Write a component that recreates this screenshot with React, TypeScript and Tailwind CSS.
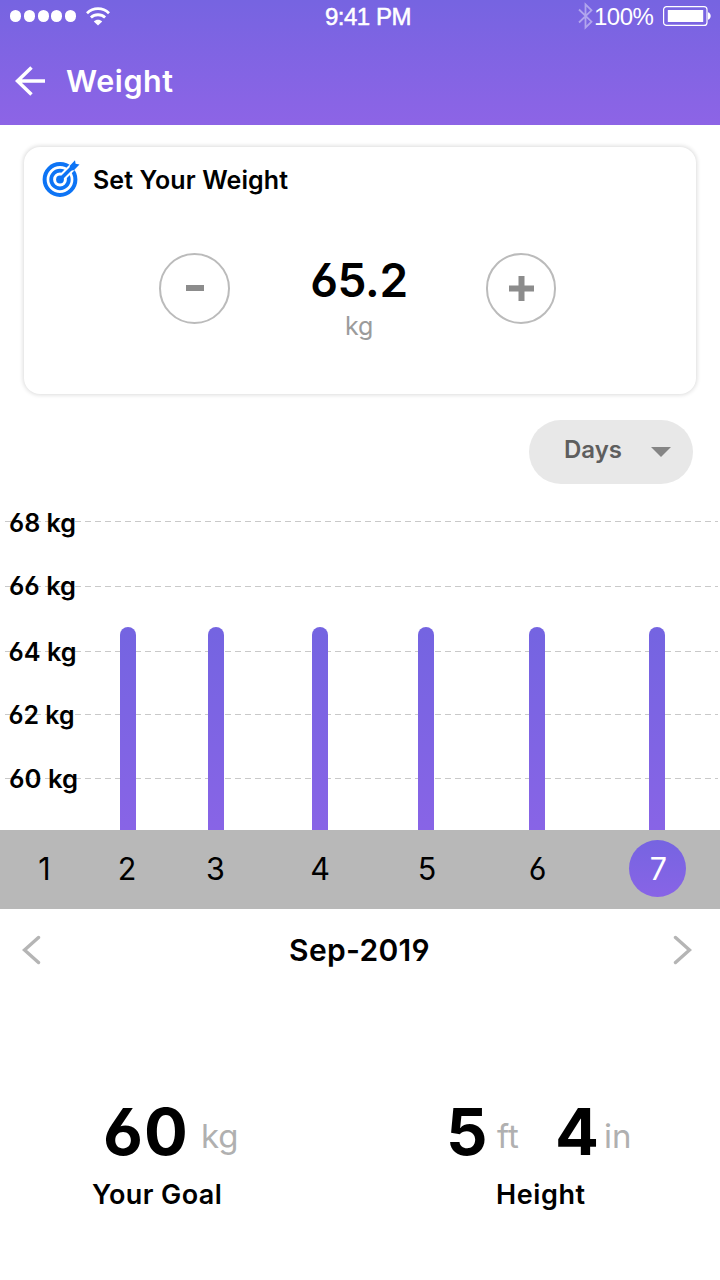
import { useState } from 'react';

type Bar = { day: number; x: number; height: number };

const bars: Bar[] = [
  { day: 2, x: 128, height: 203 },
  { day: 3, x: 216, height: 203 },
  { day: 4, x: 320, height: 203 },
  { day: 5, x: 426, height: 203 },
  { day: 6, x: 537, height: 203 },
  { day: 7, x: 657, height: 203 },
];

const gridLines = [
  { label: '68 kg', y: 37.5, textY: 48, x: 9, width: 67 },
  { label: '66 kg', y: 102.5, textY: 111, x: 9, width: 67 },
  { label: '64 kg', y: 167.5, textY: 177, x: 8.5, width: 68 },
  { label: '62 kg', y: 230.5, textY: 240, x: 8.5, width: 66 },
  { label: '60 kg', y: 294.5, textY: 304, x: 9, width: 69 },
];

// column widths keep every number under its bar
const days = [
  { day: 1, width: 'w-[89px]' },
  { day: 2, width: 'w-[76px]' },
  { day: 3, width: 'w-[101px]' },
  { day: 4, width: 'w-[108px]' },
  { day: 5, width: 'w-[106px]' },
  { day: 6, width: 'w-[115px]' },
  { day: 7, width: 'w-[125px]' },
];

function StatusBar() {
  return (
    <div className="flex h-8 items-center pl-[10px] pr-[9px]">
      <div className="flex w-[315px] items-center">
        <div className="flex gap-[2.75px]">
          {[0, 1, 2, 3, 4].map((i) => (
            <span key={i} className="h-[11.5px] w-[11px] rounded-full bg-white" />
          ))}
        </div>
        <svg className="ml-[10px]" width="24" height="19" viewBox="0 0 24 19" fill="none" stroke="white">
          <path d="M1 6.2C7.2.2 16.8.2 23 6.2" strokeWidth="2.8" />
          <path d="M4.9 10.6c4-3.8 10.2-3.8 14.2 0" strokeWidth="2.8" />
          <path d="M12 18.6l-4.2-4.2c2.4-2.2 6-2.2 8.4 0z" fill="white" stroke="none" />
        </svg>
      </div>
      <span className="w-[253px] whitespace-nowrap pt-0.5 font-['Liberation_Sans',sans-serif] text-[24px] leading-8 tracking-[-0.5px] [-webkit-text-stroke:0.5px_white]">
        9:41 PM
      </span>
      <svg width="16" height="28" viewBox="0 0 16 28" fill="none" stroke="white" strokeWidth="1.8" opacity="0.42">
        <path d="M1 7.5l12.5 12.2-6 6V2.3l6 6L1 20.5" />
      </svg>
      <span className="w-[61px] whitespace-nowrap pt-px font-['Liberation_Sans',sans-serif] text-[24px] leading-8 tracking-[-0.5px]">
        100%
      </span>
      <svg className="ml-auto" width="48" height="20" viewBox="0 0 48 20">
        <rect x="0.6" y="0.6" width="43.4" height="18.8" rx="3" fill="none" stroke="white" strokeWidth="1.2" />
        <rect x="4.8" y="4" width="35.4" height="12" fill="white" />
        <path d="M45 6.2c3.6 1.2 3.6 6.4 0 7.6z" fill="white" />
      </svg>
    </div>
  );
}

function TargetIcon() {
  return (
    <svg className="mb-[3px]" width="40" height="40" viewBox="0 0 40 40" fill="none">
      <circle cx="20" cy="21.5" r="15.4" stroke="#0d74f5" strokeWidth="4" />
      <circle cx="20" cy="21.5" r="8.8" stroke="#0d74f5" strokeWidth="3.8" />
      <path d="M21 20.5L37 4.5" stroke="white" strokeWidth="7.5" />
      <circle cx="20" cy="21.5" r="3.9" fill="#0d74f5" />
      <path d="M20 21.5L34 7.5" stroke="#0d74f5" strokeWidth="3.6" />
      <path d="M29.8 7.8L35 2.2l.6 3.6 3.9.8-5.6 5.6-4.2.4z" fill="#0d74f5" />
    </svg>
  );
}

function WeightChart() {
  return (
    <svg className="block" width="720" height="346" viewBox="0 0 720 346">
      <defs>
        <linearGradient id="bar" x1="0" y1="143" x2="0" y2="346" gradientUnits="userSpaceOnUse">
          <stop offset="0" stopColor="#7464e1" />
          <stop offset="1" stopColor="#8864e6" />
        </linearGradient>
      </defs>
      {gridLines.map((line) => (
        <g key={line.label}>
          <line x1="5" x2="718" y1={line.y} y2={line.y} stroke="#c9c9c9" strokeDasharray="6 4" />
          <text
            x={line.x}
            y={line.textY}
            textLength={line.width}
            lengthAdjust="spacingAndGlyphs"
            fontSize="25"
            fontWeight="600"
          >
            {line.label}
          </text>
        </g>
      ))}
      {bars.map((bar) => (
        <path
          key={bar.day}
          d={`M${bar.x - 8} 346v${8 - bar.height}a8 8 0 0 1 16 0v${bar.height - 8}z`}
          fill="url(#bar)"
        />
      ))}
    </svg>
  );
}

export default function App() {
  const [weight, setWeight] = useState(65.2);
  const [selectedDay, setSelectedDay] = useState(7);

  return (
    <div className="flex h-[1280px] w-[720px] flex-col overflow-hidden bg-white font-['Inter',sans-serif] text-black [font-feature-settings:'cv03','cv04']">
      <header className="h-[125px] bg-linear-to-b from-[#7664e1] to-[#8d64e6] text-white">
        <StatusBar />
        <div className="flex h-[97px] items-center pl-[15px]">
          <button aria-label="Back">
            <svg width="31" height="30" viewBox="0 0 31 30" fill="none" stroke="white" strokeWidth="3.5">
              <path d="M30 15H3M16.5 1.5L2.5 15l14 13.5" />
            </svg>
          </button>
          <h1 className="ml-[20px] text-[30.5px] font-semibold leading-9 tracking-[0.6px]">Weight</h1>
        </div>
      </header>

      <section className="mx-6 mt-[22px] h-[247px] shrink-0 rounded-[16px] bg-white shadow-[0_0_4px_1px_rgba(0,0,0,0.14)]">
        <div className="flex h-[65px] items-center pl-[16px]">
          <TargetIcon />
          <h2 className="ml-[13px] whitespace-nowrap text-[25px] font-semibold leading-8 tracking-[0.1px]">Set Your Weight</h2>
        </div>
        <div className="flex pl-[135px] pt-[41px]">
          <button
            aria-label="Decrease"
            onClick={() => setWeight(weight - 0.1)}
            className="flex h-[70.5px] w-[70.5px] items-center justify-center rounded-full border-2 border-[#bbb]"
          >
            <span className="ml-px h-[6px] w-[18px] bg-[#8c8c8c]" />
          </button>
          <div className="flex w-[256px] flex-col items-center">
            <span className="mt-px pl-[3px] text-[46px] font-semibold leading-[52px] tracking-[-0.3px]">{weight.toFixed(1)}</span>
            <span className="mt-1 pl-[3px] text-[25px] leading-8 tracking-[-0.3px] text-[#9b9b9b]">kg</span>
          </div>
          <button
            aria-label="Increase"
            onClick={() => setWeight(weight + 0.1)}
            className="flex h-[70.5px] w-[70.5px] items-center justify-center rounded-full border-2 border-[#bbb]"
          >
            <svg className="ml-px" width="25" height="25" viewBox="0 0 25 25" fill="#8c8c8c">
              <path d="M9.5 0h6v9.5H25v6h-9.5V25h-6v-9.5H0v-6h9.5z" />
            </svg>
          </button>
        </div>
      </section>

      <button className="ml-[529px] mt-[26px] flex h-16 w-[164px] shrink-0 items-center rounded-full bg-[#e8e8e8] pl-[35px]">
        <span className="w-[87px] pb-1 text-left text-[24px] font-semibold leading-8 text-[#5e5e5e]">Days</span>
        <svg width="20" height="10" viewBox="0 0 20 10" fill="#858585">
          <path d="M0 0h20L10 10z" />
        </svg>
      </button>

      <WeightChart />

      <div className="flex h-[79px] shrink-0 items-center bg-[#b8b8b8] pb-[2px] text-[30.5px] leading-9">
        {days.map(({ day, width }) => (
          <button key={day} onClick={() => setSelectedDay(day)} className={`${width} flex justify-center`}>
            <span
              className={
                day === selectedDay
                  ? 'flex h-[57px] w-[57px] items-center justify-center rounded-full bg-linear-to-b from-[#7664e1] to-[#8864e6] pl-0.5 text-white'
                  : ''
              }
            >
              {day}
            </span>
          </button>
        ))}
      </div>

      <div className="flex h-[82px] shrink-0 items-center justify-between pl-[22px] pr-[28px]">
        <button aria-label="Previous month">
          <svg width="19" height="30" viewBox="0 0 19 30" fill="none" stroke="#b5b5b5" strokeWidth="3.4" strokeLinecap="round">
            <path d="M16.5 2.5L2.5 15l14 12.5" />
          </svg>
        </button>
        <span className="pl-[5px] text-[30px] font-semibold leading-9 tracking-[0.3px]">Sep-2019</span>
        <button aria-label="Next month">
          <svg width="19" height="30" viewBox="0 0 19 30" fill="none" stroke="#b5b5b5" strokeWidth="3.4" strokeLinecap="round">
            <path d="M2.5 2.5l14 12.5-14 12.5" />
          </svg>
        </button>
      </div>

      <div className="mt-[105px] flex">
        <div className="w-[360px]">
          <div className="flex h-[81px] items-start pl-[103px]">
            <span className="w-[98px] text-[65px] font-bold leading-[71px] tracking-[1px]">60</span>
            <span className="text-[33px] leading-[80px] text-[#b0b0b0]">kg</span>
          </div>
          <p className="pl-[92px] text-[27px] font-semibold leading-9 tracking-[0.4px]">Your Goal</p>
        </div>
        <div className="w-[360px]">
          <div className="flex h-[81px] items-start pl-[86px]">
            <span className="w-[51px] text-[65px] font-bold leading-[71px]">5</span>
            <span className="w-[58px] text-[33px] leading-[80px] text-[#b0b0b0]">ft</span>
            <span className="w-[49px] text-[65px] font-bold leading-[71px]">4</span>
            <span className="text-[33px] leading-[80px] text-[#b0b0b0]">in</span>
          </div>
          <p className="pl-[136px] text-[27px] font-semibold leading-9 tracking-[0.6px]">Height</p>
        </div>
      </div>
    </div>
  );
}
